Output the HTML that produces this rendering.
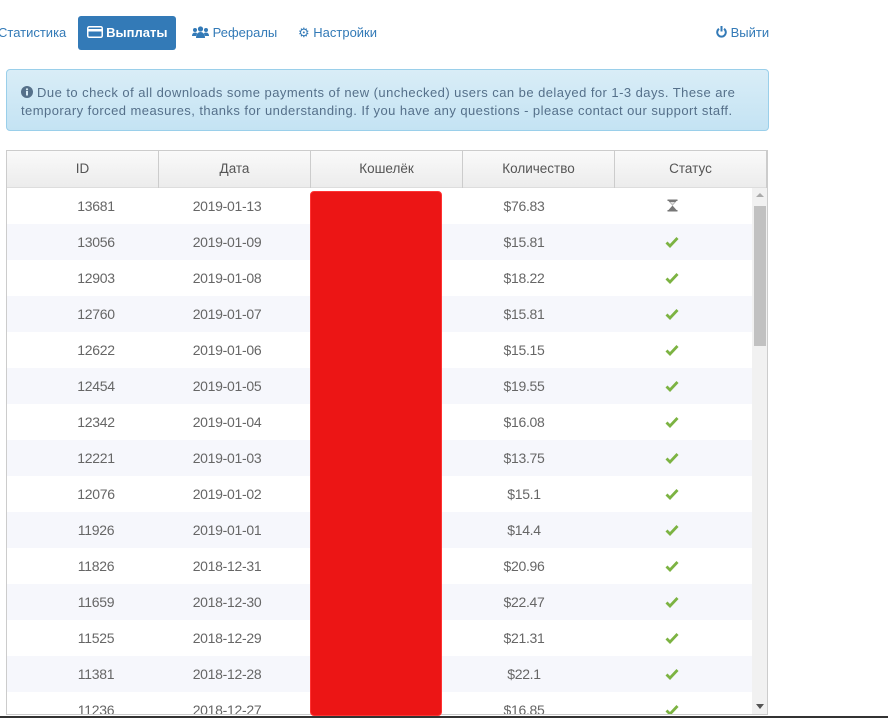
<!DOCTYPE html>
<html><head><meta charset="utf-8"><style>
*{margin:0;padding:0;box-sizing:border-box}
body{width:888px;height:718px;overflow:hidden;background:#fff;font-family:"Liberation Sans",sans-serif;position:relative}
.nav a{position:absolute;top:16px;height:34px;line-height:34px;font-size:13px;color:#337ab7;white-space:nowrap}
.btn{background:#337ab7;color:#fff!important;border-radius:3px;left:78px;width:98px;text-align:center;font-weight:bold}
.alert{position:absolute;left:6px;top:69px;width:763px;height:62px;background:linear-gradient(#d9edf7,#c4e3f3);border:1px solid #9acfea;border-radius:4px;color:#55708a;font-size:13px;line-height:18px;padding:14px 0 0 14px;white-space:nowrap;letter-spacing:.45px}
.tbl{position:absolute;left:6px;top:150px;width:762px;height:565px;border:1px solid #ccc;overflow:hidden}
.hd{position:absolute;left:0;top:0;width:760px;height:37px;background:linear-gradient(#fafafa,#ececec);border-bottom:1px solid #ddd}
.hd div{position:absolute;top:0;height:37px;line-height:36px;text-align:center;font-size:13.5px;color:#555;border-right:1px solid #ccc;width:152px}
.row{position:absolute;left:0;width:745px;height:36px}
.row:nth-child(even){background:#f6f7fc}
.row div{position:absolute;top:0;height:36px;line-height:36px;text-align:center;font-size:14px;color:#666;width:120px;letter-spacing:-.3px}
.row div:nth-child(1){left:29px}
.row div:nth-child(2){left:160px}
.row div:nth-child(3){left:457px}
.row div:nth-child(4){left:605px}
.row svg{vertical-align:-1px}
.sb{position:absolute;left:745px;top:37px;width:16px;height:528px;background:#f1f1f1}
.th{position:absolute;left:2px;top:18px;width:12px;height:140px;background:#c1c1c1}
.red{position:absolute;left:310px;top:191px;width:132px;height:525px;background:#ec1515;border-radius:4px;border:1px solid #f33}
.bot{position:absolute;left:0;top:716px;width:888px;height:2px;background:#333}
</style></head><body>
<svg width="0" height="0" style="position:absolute"><defs><symbol id="ck" viewBox="0 0 14 12"><path d="M1.5 6.5l3.5 3.5 7.5-8" fill="none" stroke="#7cb342" stroke-width="2.8"/></symbol></defs></svg>
<div class="nav">
<a style="left:-2px">Статистика</a>
<a class="btn"><svg width="16" height="12" viewBox="0 0 16 12" style="vertical-align:-1px"><rect x="0.75" y="0.75" width="14.5" height="10.5" rx="1.5" fill="none" stroke="#fff" stroke-width="1.5"/><rect x="1" y="3" width="14" height="2.5" fill="#fff"/></svg> Выплаты</a>
<a style="left:192px"><svg width="17" height="12" viewBox="0 0 17 12" style="vertical-align:-1px" fill="#337ab7"><circle cx="8.5" cy="3" r="2.6"/><circle cx="3" cy="4" r="2"/><circle cx="14" cy="4" r="2"/><path d="M4 12c0-4 2-6 4.5-6S13 8 13 12z"/><path d="M0 10c0-2 1-3.5 3-3.5s2 1 2 1L4 10z"/><path d="M17 10c0-2-1-3.5-3-3.5s-2 1-2 1L13 10z"/></svg> Рефералы</a>
<a style="left:298px"><span style="font-size:13px">⚙</span> Настройки</a>
<a style="left:716px"><svg width="11" height="12" viewBox="0 0 11 12" style="vertical-align:-1px"><path d="M3 2.8A4.3 4.3 0 1 0 8 2.8" fill="none" stroke="#337ab7" stroke-width="2"/><line x1="5.5" y1="0" x2="5.5" y2="5.5" stroke="#337ab7" stroke-width="2"/></svg> Выйти</a>
</div>
<div class="alert"><svg width="12" height="12" viewBox="0 0 12 12" style="vertical-align:-1px"><circle cx="6" cy="6" r="6" fill="#55708a"/><rect x="5" y="5" width="2" height="4.5" fill="#d9edf7"/><circle cx="6" cy="3.3" r="1.1" fill="#d9edf7"/></svg> Due to check of all downloads some payments of new (unchecked) users can be delayed for 1-3 days. These are<br>temporary forced measures, thanks for understanding. If you have any questions - please contact our support staff.</div>
<div class="tbl">
<div class="hd"><div style="left:0">ID</div><div style="left:152px">Дата</div><div style="left:304px">Кошелёк</div><div style="left:456px">Количество</div><div style="left:608px">Статус</div></div>
<div>
<div class="row" style="top:37px"><div>13681</div><div>2019-01-13</div><div>$76.83</div><div><svg width="11" height="13" viewBox="0 0 11 13"><path d="M0.5 0.5h10v1.5h-10zM0.5 11h10v1.5h-10zM1.5 2l4 4.5-4 4.5h8l-4-4.5 4-4.5z" fill="#777"/><path d="M3 3h5L5.5 6z" fill="#ddd"/></svg></div></div>
<div class="row" style="top:73px"><div>13056</div><div>2019-01-09</div><div>$15.81</div><div><svg width="14" height="12"><use href="#ck"/></svg></div></div>
<div class="row" style="top:109px"><div>12903</div><div>2019-01-08</div><div>$18.22</div><div><svg width="14" height="12"><use href="#ck"/></svg></div></div>
<div class="row" style="top:145px"><div>12760</div><div>2019-01-07</div><div>$15.81</div><div><svg width="14" height="12"><use href="#ck"/></svg></div></div>
<div class="row" style="top:181px"><div>12622</div><div>2019-01-06</div><div>$15.15</div><div><svg width="14" height="12"><use href="#ck"/></svg></div></div>
<div class="row" style="top:217px"><div>12454</div><div>2019-01-05</div><div>$19.55</div><div><svg width="14" height="12"><use href="#ck"/></svg></div></div>
<div class="row" style="top:253px"><div>12342</div><div>2019-01-04</div><div>$16.08</div><div><svg width="14" height="12"><use href="#ck"/></svg></div></div>
<div class="row" style="top:289px"><div>12221</div><div>2019-01-03</div><div>$13.75</div><div><svg width="14" height="12"><use href="#ck"/></svg></div></div>
<div class="row" style="top:325px"><div>12076</div><div>2019-01-02</div><div>$15.1</div><div><svg width="14" height="12"><use href="#ck"/></svg></div></div>
<div class="row" style="top:361px"><div>11926</div><div>2019-01-01</div><div>$14.4</div><div><svg width="14" height="12"><use href="#ck"/></svg></div></div>
<div class="row" style="top:397px"><div>11826</div><div>2018-12-31</div><div>$20.96</div><div><svg width="14" height="12"><use href="#ck"/></svg></div></div>
<div class="row" style="top:433px"><div>11659</div><div>2018-12-30</div><div>$22.47</div><div><svg width="14" height="12"><use href="#ck"/></svg></div></div>
<div class="row" style="top:469px"><div>11525</div><div>2018-12-29</div><div>$21.31</div><div><svg width="14" height="12"><use href="#ck"/></svg></div></div>
<div class="row" style="top:505px"><div>11381</div><div>2018-12-28</div><div>$22.1</div><div><svg width="14" height="12"><use href="#ck"/></svg></div></div>
<div class="row" style="top:541px"><div>11236</div><div>2018-12-27</div><div>$16.85</div><div><svg width="14" height="12"><use href="#ck"/></svg></div></div>
</div>
<div class="sb"><div style="position:absolute;left:4px;top:5px;width:0;height:0;border:4px solid transparent;border-bottom:4px solid #aaa;border-top:0"></div><div class="th"></div><div style="position:absolute;left:4px;top:516px;width:0;height:0;border:4px solid transparent;border-top:5px solid #555;border-bottom:0"></div></div>
</div>
<div class="red"></div>
<div class="bot"></div>
</body></html>
